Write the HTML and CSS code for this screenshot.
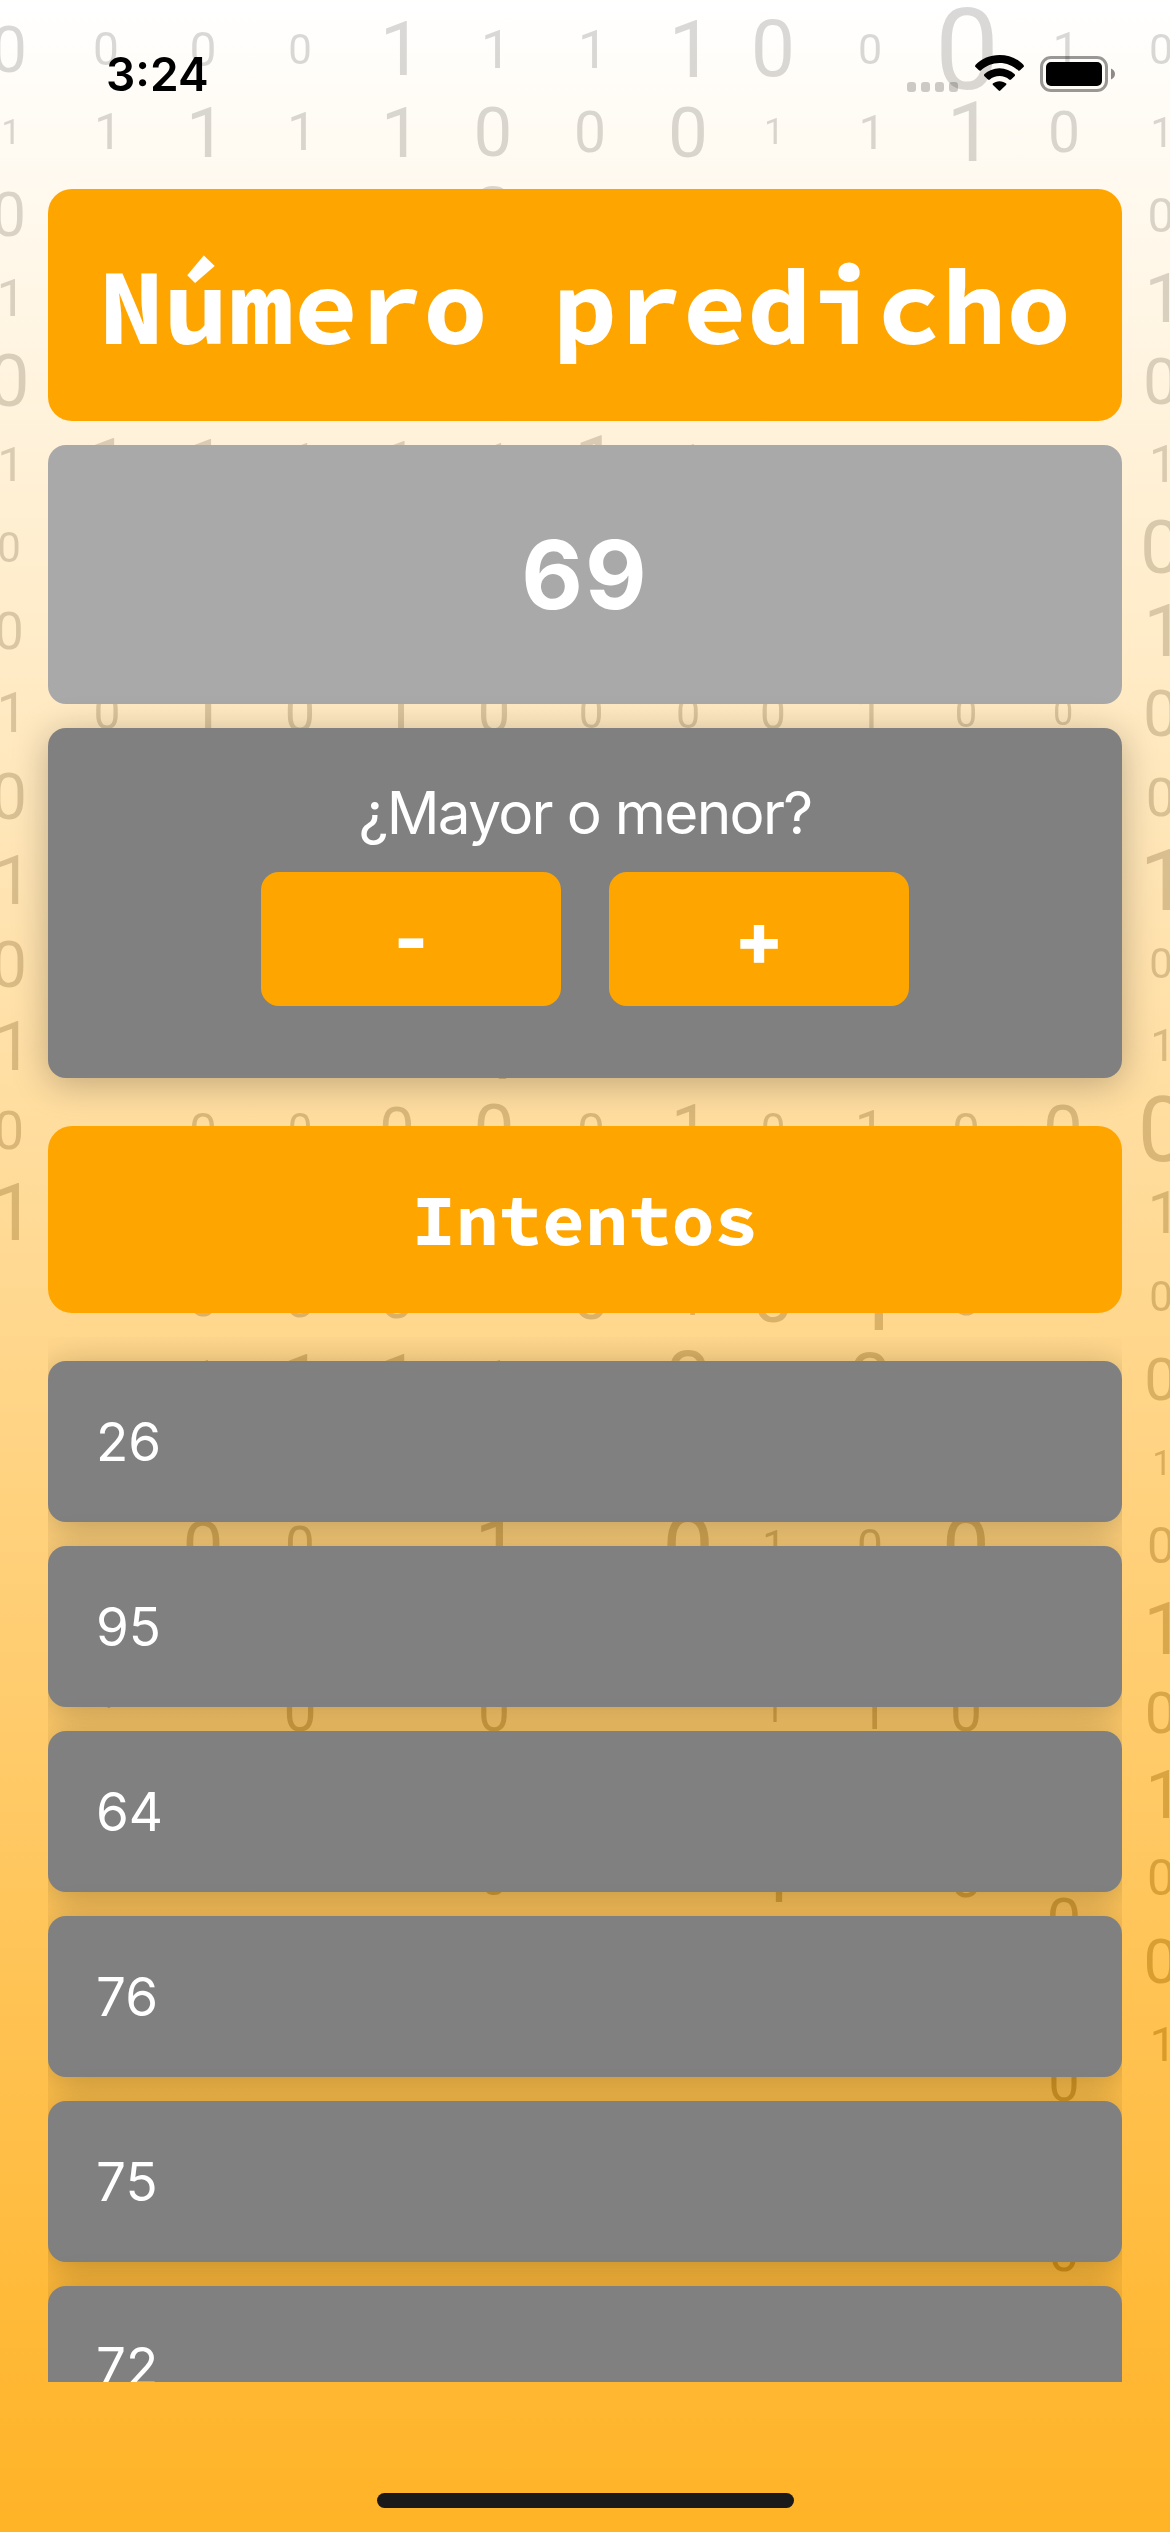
FILE: index.html
```html
<!DOCTYPE html>
<html lang="es">
<head>
<meta charset="utf-8">
<title>Número predicho</title>
<link rel="stylesheet" href="styles.css">
</head>
<body>
<div class="screen">
  <svg class="digits" viewBox="0 0 1170 2532" aria-hidden="true">
    <!-- row 1 -->
    <text x="9" y="71.5" font-size="64">0</text><text x="106" y="65" font-size="46">0</text><text x="203" y="65.500" font-size="48">0</text><text x="300" y="63.500" font-size="42">0</text>
    <text x="401" y="75" font-size="76">1</text><text x="496" y="68" font-size="54">1</text><text x="593" y="68" font-size="54">1</text><text x="691" y="77" font-size="80">1</text>
    <text x="773" y="76" font-size="79">0</text><text x="870" y="63.500" font-size="43">0</text><text x="967" y="89" font-size="114">0</text><text x="1066" y="66" font-size="48">1</text><text x="1161" y="63.500" font-size="43">0</text>
    <!-- row 2 -->
    <text x="11" y="144" font-size="35">1</text><text x="108" y="149" font-size="50">1</text><text x="206" y="157" font-size="71">1</text><text x="302" y="150" font-size="53">1</text><text x="401" y="157" font-size="71">1</text>
    <text x="493" y="156" font-size="69">0</text><text x="590" y="151.500" font-size="57">0</text><text x="688" y="156.500" font-size="71">0</text><text x="774" y="144" font-size="36">1</text><text x="872" y="149" font-size="48">1</text>
    <text x="970" y="161" font-size="84">1</text><text x="1064" y="151.500" font-size="57">0</text><text x="1162" y="147" font-size="42">1</text>
    <text x="397" y="242" font-size="73">0</text><text x="493" y="245" font-size="81">0</text>
    <!-- left column -->
    <text x="9" y="235.500" font-size="61">0</text><text x="11" y="316" font-size="52">1</text><text x="9" y="406" font-size="73">0</text><text x="11" y="481" font-size="49">1</text><text x="9" y="561.500" font-size="42">0</text><text x="9" y="648.500" font-size="52">0</text>
    <text x="12" y="732" font-size="55">1</text><text x="9" y="819" font-size="64">0</text><text x="13" y="904" font-size="68">1</text><text x="9" y="986.500" font-size="64">0</text><text x="13" y="1070" font-size="68">1</text><text x="9" y="1148.500" font-size="54">0</text><text x="13" y="1240" font-size="80">1</text>
    <!-- right column -->
    <text x="1161" y="231.500" font-size="48">0</text><text x="1164" y="321.500" font-size="69">1</text><text x="1161" y="403.500" font-size="64">0</text><text x="1163" y="482" font-size="51">1</text><text x="1161" y="573" font-size="75">0</text><text x="1164" y="656" font-size="73">1</text>
    <text x="1161" y="735.500" font-size="64">0</text><text x="1161" y="815.500" font-size="54">0</text><text x="1164" y="909.500" font-size="86">1</text><text x="1161" y="977.500" font-size="42">0</text><text x="1163" y="1061" font-size="45">1</text><text x="1163" y="1161" font-size="90">0</text>
    <text x="1164" y="1233" font-size="59">1</text><text x="1161" y="1310.500" font-size="42">0</text><text x="1161" y="1400" font-size="60">0</text><text x="1162" y="1474.500" font-size="35">1</text><text x="1161" y="1562.500" font-size="50">0</text><text x="1164" y="1654" font-size="73">1</text>
    <text x="1161" y="1732.500" font-size="58">0</text><text x="1164" y="1818" font-size="66">1</text><text x="1161" y="1895" font-size="50">0</text><text x="1161" y="1983" font-size="62">0</text><text x="1163" y="2061" font-size="48">1</text>
    <!-- between the cards -->
    <text x="109" y="488" font-size="70">1</text><text x="206" y="487" font-size="67">1</text><text x="303" y="483" font-size="56">1</text><text x="400" y="485" font-size="62">1</text><text x="497" y="483" font-size="56">1</text><text x="596" y="491" font-size="78">1</text><text x="690" y="482" font-size="53">1</text>
    <text x="107" y="729" font-size="48">0</text><text x="206" y="736" font-size="68">1</text><text x="300" y="731" font-size="54">0</text><text x="399" y="736" font-size="66">1</text><text x="494" y="732" font-size="58">0</text><text x="591" y="728" font-size="44">0</text><text x="688" y="728" font-size="43">0</text><text x="773" y="729" font-size="46">0</text><text x="870" y="730" font-size="48">1</text><text x="966" y="727" font-size="40">0</text><text x="1063" y="725" font-size="36">0</text>
    <text x="500" y="1079" font-size="82">1</text><text x="203" y="1147" font-size="49">0</text><text x="300" y="1145" font-size="44">0</text><text x="397" y="1152" font-size="63">0</text><text x="494" y="1156" font-size="73">0</text><text x="591" y="1147" font-size="49">0</text><text x="690" y="1153" font-size="68">1</text><text x="773" y="1145" font-size="44">0</text><text x="870" y="1148" font-size="54">1</text><text x="966" y="1147" font-size="49">0</text><text x="1063" y="1155" font-size="71">0</text>
    <text x="203" y="1315.500" font-size="52">0</text><text x="300" y="1316.500" font-size="56">0</text><text x="397" y="1318" font-size="62">0</text><text x="591" y="1319" font-size="66">0</text><text x="691" y="1315" font-size="52">1</text><text x="773" y="1322" font-size="74">0</text><text x="876" y="1330" font-size="92">1</text><text x="966" y="1314.500" font-size="52">0</text>
    <text x="204" y="1398" font-size="54">1</text><text x="302" y="1403" font-size="68">1</text><text x="399" y="1403" font-size="68">1</text><text x="496" y="1398" font-size="54">1</text><text x="688" y="1410" font-size="84">0</text><text x="870" y="1408" font-size="78">0</text>
    <text x="203" y="1573" font-size="73">0</text><text x="300" y="1564" font-size="53">0</text><text x="497" y="1575" font-size="80">1</text><text x="688" y="1582" font-size="92">0</text><text x="774" y="1560" font-size="42">1</text><text x="870" y="1562" font-size="46">0</text><text x="966" y="1578" font-size="85">0</text>
    <text x="108" y="1708" font-size="30">1</text><text x="300" y="1730.500" font-size="59">0</text><text x="494" y="1730.500" font-size="57">0</text><text x="774" y="1722" font-size="37">1</text><text x="873" y="1729" font-size="52">1</text><text x="966" y="1730.500" font-size="57">0</text>
    <text x="494" y="1894.500" font-size="50">0</text><text x="777" y="1902" font-size="70">1</text><text x="966" y="1896.500" font-size="58">0</text><text x="1064" y="1942" font-size="62">0</text>
    <text x="1064" y="2100.500" font-size="56">0</text><text x="1064" y="2270.500" font-size="54">0</text>
  </svg>

  <header class="status">
    <span class="clock">3:24</span>
    <div class="indicators">
      <div class="signal"><i></i><i></i><i></i><i></i></div>
      <svg class="wifi" viewBox="0 0 49 36">
        <path d="M24.500 0C33.800 0 42.500 3.500 48.600 10L49 11.500L44.800 15.600L43.500 15.700C38.300 10.700 31.700 7.900 24.500 7.900S10.700 10.700 5.500 15.700L4.200 15.600L0 11.500L.4 10C6.500 3.500 15.200 0 24.500 0Z"/>
        <path d="M24.500 13.200C30.500 13.200 35.700 15.500 39.800 19.300L40 20.700L35.800 24.700L34.400 24.800C31.700 22.400 28.200 21.100 24.500 21.100S17.300 22.400 14.600 24.800L13.200 24.700L9 20.700L9.200 19.300C13.300 15.500 18.500 13.200 24.500 13.200Z"/>
        <path d="M24.500 26.200C27.200 26.200 29.500 27.100 31.300 28.600L31.300 29.800L25.300 35.600L24.500 36L23.700 35.600L17.700 29.800L17.700 28.600C19.500 27.100 21.800 26.200 24.500 26.200Z"/>
      </svg>
      <svg class="battery" viewBox="0 0 76 36">
        <rect x="1.500" y="1.500" width="65" height="33" rx="9.500" fill="none" stroke="#000" stroke-opacity=".4" stroke-width="3"/>
        <rect x="6" y="6" width="56" height="24" rx="5"/>
        <path d="M71 12.500C73.500 13.500 75 15.500 75 18S73.500 22.500 71 23.500Z" fill-opacity=".45"/>
      </svg>
    </div>
  </header>

  <main class="content">
    <h1 class="banner banner-large">Número predicho</h1>
    <div class="guess">69</div>
    <section class="card question">
      <p class="prompt">¿Mayor o menor?</p>
      <div class="buttons">
        <button class="button">-</button>
        <button class="button">+</button>
      </div>
    </section>
    <h2 class="banner banner-small">Intentos</h2>
    <ul class="attempts">
      <li class="card attempt">26</li>
      <li class="card attempt">95</li>
      <li class="card attempt">64</li>
      <li class="card attempt">76</li>
      <li class="card attempt">75</li>
      <li class="card attempt">72</li>
    </ul>
  </main>
  <footer class="home"><div class="home-bar"></div></footer>
</div>
</body>
</html>
```
FILE: styles.css
```css
* { box-sizing: border-box; margin: 0; padding: 0; }

body {
  width: 1170px;
  height: 2532px;
  overflow: hidden;
  font-family: Inter, "Liberation Sans", sans-serif;
}

.screen {
  position: relative;
  isolation: isolate;
  display: flex;
  flex-direction: column;
  height: 2532px;
  overflow: hidden;
  background: linear-gradient(#fff, #ffb326);
}

.digits {
  position: absolute;
  inset: 0;
  z-index: -1;
  width: 1170px;
  height: 2532px;
  font-family: Roboto, sans-serif;
  font-weight: 450;
  text-anchor: middle;
  fill: #262626;
  mix-blend-mode: difference;
}

.status {
  display: flex;
  justify-content: space-between;
  align-items: flex-start;
  height: 141px;
  padding: 55px 54px 0 106px;
}

.clock {
  font-size: 46px;
  font-weight: 600;
  line-height: 38px;
}

.indicators { display: flex; height: 37px; }

.signal { display: flex; align-items: flex-end; gap: 5px; margin-right: 17px; }
.signal i { width: 9px; height: 10px; border-radius: 3px; background: rgba(0, 0, 0, .2); }

.wifi { width: 49px; height: 36px; margin-right: 16px; }
.battery { width: 76px; height: 36px; margin-top: 1px; }

.content { display: flex; flex-direction: column; padding: 48px 48px 0; }

.banner {
  display: flex;
  align-items: center;
  justify-content: center;
  border-radius: 24px;
  background: #ffa500;
  color: #fff;
  font-family: "Source Code Pro", "Noto Sans Mono CJK SC", "Liberation Mono", monospace;
  font-weight: 700;
  white-space: nowrap;
}
.banner-large { height: 232px; padding-top: 2px; font-size: 108px; line-height: 136px; }
.banner-small { height: 187px; margin-top: 48px; font-size: 72px; line-height: 91px; }

.guess {
  display: flex;
  align-items: center;
  justify-content: center;
  height: 259px;
  margin: 24px 0;
  border-radius: 18px;
  background: #a9a9a9;
  color: #fff;
  font-size: 95px;
  font-weight: 700;
  letter-spacing: 2px;
}

.card {
  border-radius: 18px;
  background: #808080;
  color: #fff;
  box-shadow: 0 6px 36px rgba(0, 0, 0, .26);
}

.question {
  display: flex;
  flex-direction: column;
  align-items: center;
  gap: 24px;
  height: 350px;
  padding-top: 48px;
}
.prompt { padding-top: 1px; font-size: 58.500px; line-height: 71px; letter-spacing: -1.700px; }

.buttons { display: flex; gap: 48px; }
.button {
  width: 300px;
  height: 134px;
  border: 0;
  border-radius: 18px;
  background: #ffa500;
  color: #fff;
  font: 800 73px/134px Inter, sans-serif;
}

.attempts {
  display: flex;
  flex-direction: column;
  gap: 24px;
  height: 1045px;
  margin-top: 24px;
  padding-top: 24px;
  overflow: hidden;
  list-style: none;
}
.attempt {
  flex: none;
  height: 161px;
  padding-left: 48px;
  font-size: 53px;
  line-height: 163px;
}

.home { display: flex; justify-content: center; padding-top: 111px; }
.home-bar { width: 417px; height: 15px; border-radius: 8px; background: #1a1a1a; }
```
